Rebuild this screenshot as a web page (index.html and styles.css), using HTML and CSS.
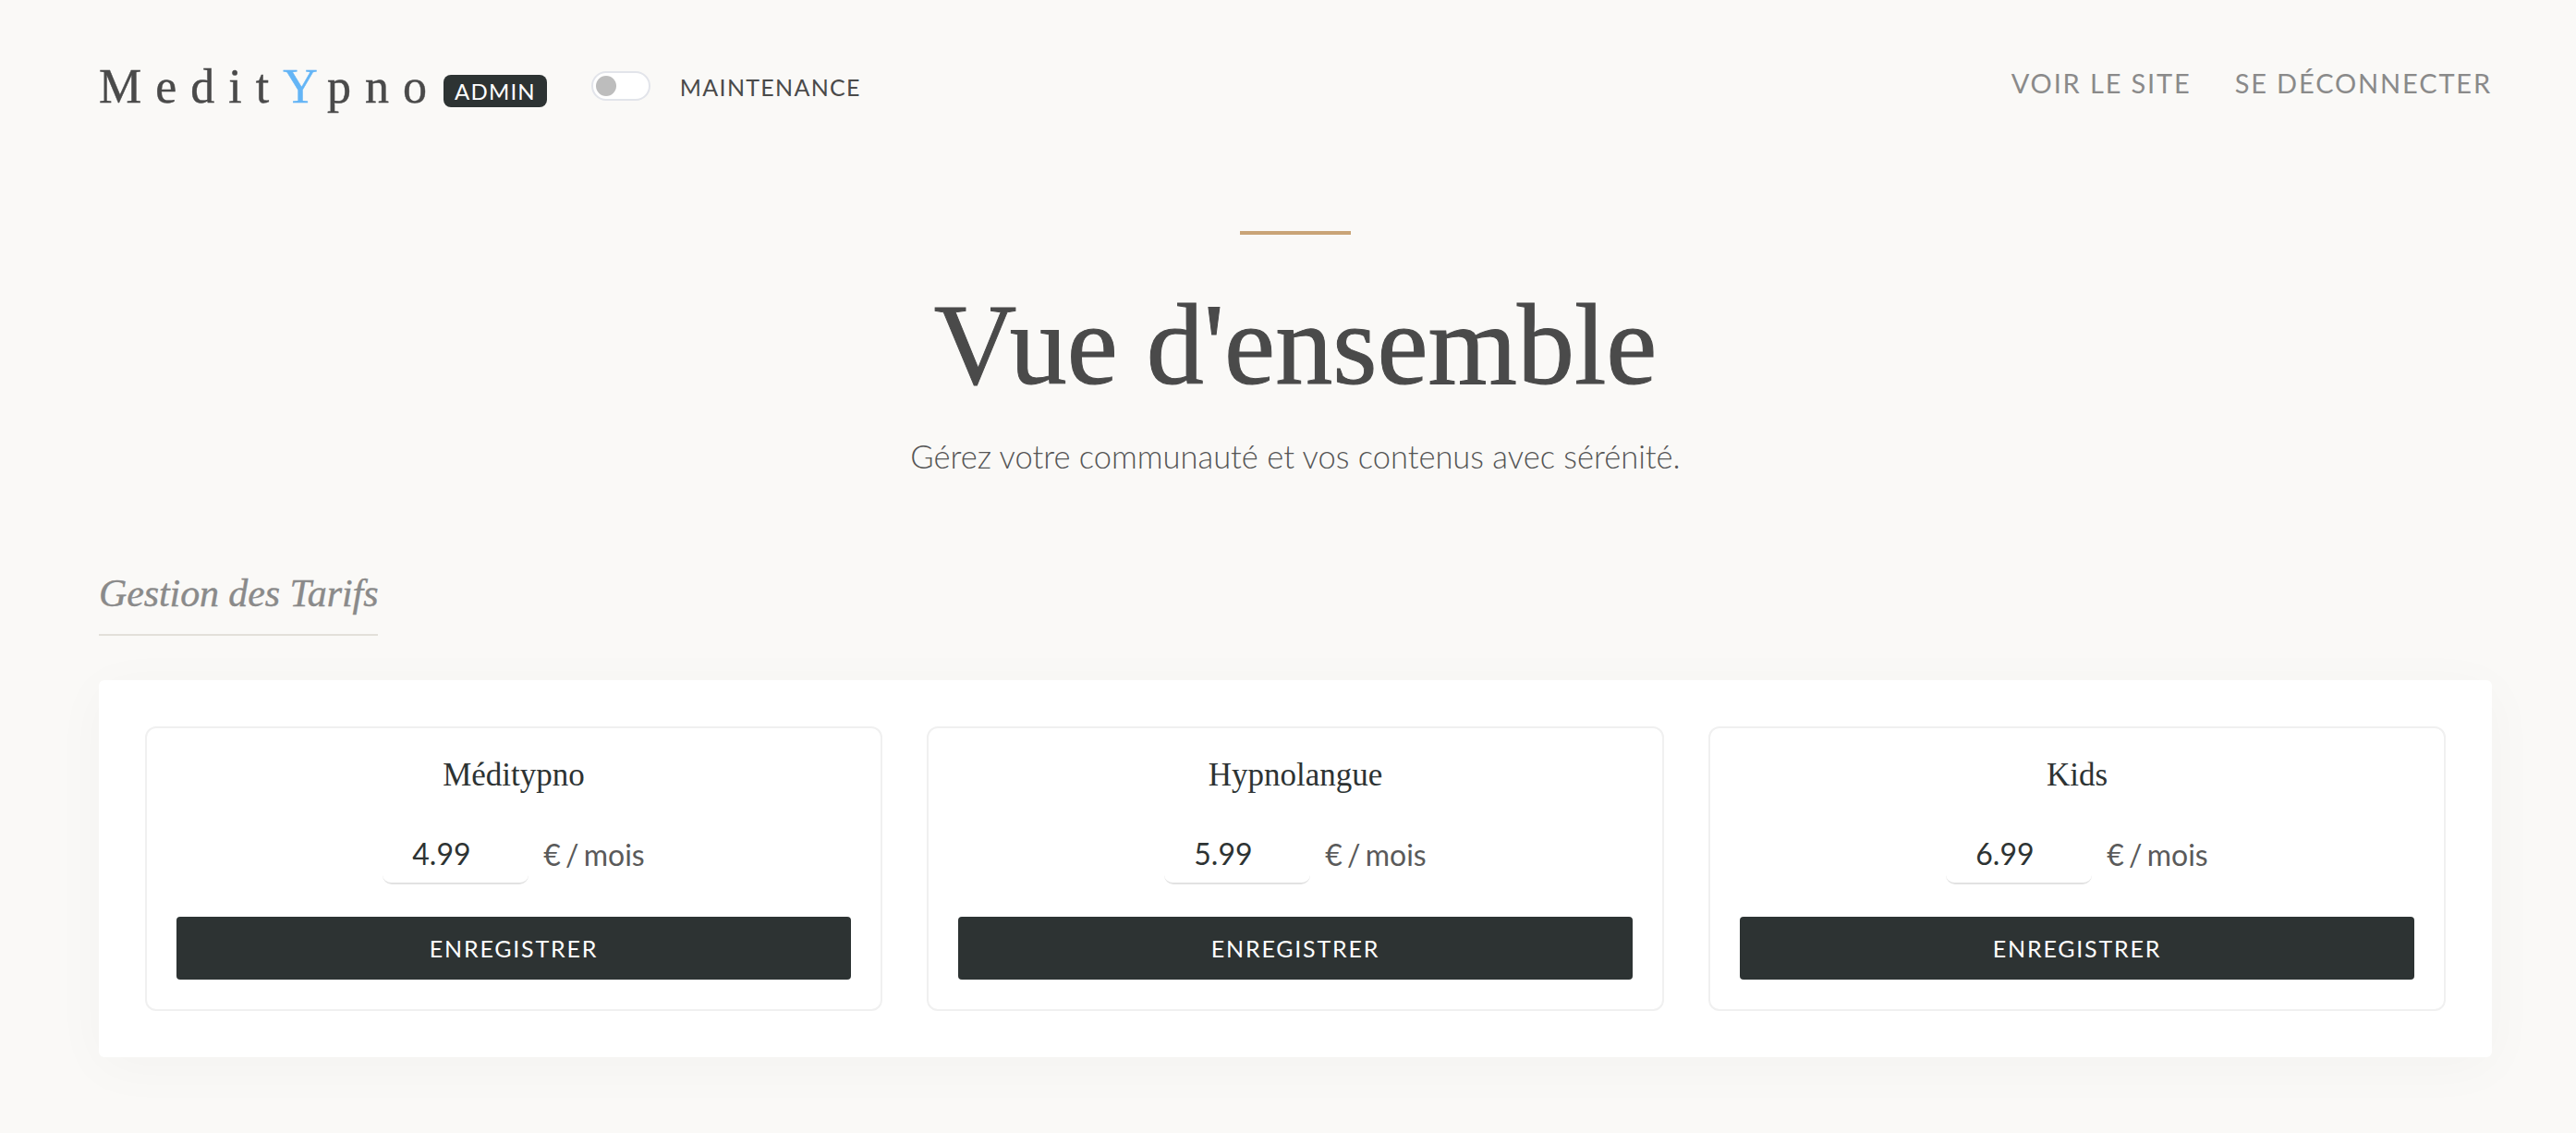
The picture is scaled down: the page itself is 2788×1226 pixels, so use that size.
FILE: index.html
```html
<!DOCTYPE html>
<html lang="fr">
<head>
    <meta charset="UTF-8">
    <meta name="viewport" content="width=device-width, initial-scale=1.0">
    <title>MeditYpno Admin</title>
    <link rel="stylesheet" href="styles.css">
</head>
<body>
    <header class="topbar">
        <div class="topbar-left">
            <a class="logo">Medit<span class="logo-y">Y</span>pno</a>
            <span class="badge">ADMIN</span>
            <div class="maintenance">
                <span class="switch"><span class="switch-knob"></span></span>
                <span class="maintenance-label">MAINTENANCE</span>
            </div>
        </div>
        <nav class="topnav">
            <a>VOIR LE SITE</a>
            <a>SE DÉCONNECTER</a>
        </nav>
    </header>

    <section class="hero">
        <div class="hero-line"></div>
        <h1>Vue d'ensemble</h1>
        <p>Gérez votre communauté et vos contenus avec sérénité.</p>
    </section>

    <main class="content">
        <h2 class="section-title">Gestion des Tarifs</h2>
        <div class="panel">
            <form class="price-card">
                <h3>Méditypno</h3>
                <div class="price-row">
                    <input class="price-input" type="text" value="4.99">
                    <span class="price-unit">€ / mois</span>
                </div>
                <button class="save-btn" type="button">ENREGISTRER</button>
            </form>
            <form class="price-card">
                <h3>Hypnolangue</h3>
                <div class="price-row">
                    <input class="price-input" type="text" value="5.99">
                    <span class="price-unit">€ / mois</span>
                </div>
                <button class="save-btn" type="button">ENREGISTRER</button>
            </form>
            <form class="price-card">
                <h3>Kids</h3>
                <div class="price-row">
                    <input class="price-input" type="text" value="6.99">
                    <span class="price-unit">€ / mois</span>
                </div>
                <button class="save-btn" type="button">ENREGISTRER</button>
            </form>
        </div>
    </main>
</body>
</html>
```

FILE: styles.css
```css
* {
    box-sizing: border-box;
}

body {
    margin: 0;
    height: 1226px;
    overflow: hidden;
    background-color: #faf9f7;
    color: #4a4a4a;
    font-family: Lato, "Open Sans", sans-serif;
}

.topbar {
    display: flex;
    justify-content: space-between;
    align-items: flex-start;
    padding: 62px 91px 0 107px;
    height: 250px;
}

.topbar-left {
    display: flex;
    align-items: center;
    height: 62px;
}

.logo {
    margin-right: 3px;
    font-family: "Liberation Serif", serif;
    font-size: 52px;
    letter-spacing: 15px;
    color: #4a4a4a;
    -webkit-text-stroke: 0.4px #4a4a4a;
}

.logo-y {
    color: #64b5f6;
    -webkit-text-stroke: 0.4px #64b5f6;
}

.badge {
    margin-top: 11px;
    padding: 0 12px;
    height: 35px;
    line-height: 36px;
    border-radius: 8px;
    background-color: #2d3333;
    color: #fff;
    font-size: 24px;
    letter-spacing: 1.2px;
}

.maintenance {
    display: flex;
    align-items: center;
    margin-left: 48px;
}

.switch {
    display: flex;
    align-items: center;
    width: 64px;
    height: 32px;
    padding-left: 3px;
    border: 2px solid #e2e4ea;
    border-radius: 16px;
    background-color: #fff;
}

.switch-knob {
    width: 22px;
    height: 22px;
    border-radius: 50%;
    background-color: #bdbdbd;
}

.maintenance-label {
    margin-left: 32px;
    margin-top: 2px;
    font-size: 25px;
    letter-spacing: 1.3px;
    color: #4a4a4a;
}

.topnav {
    display: flex;
    gap: 47px;
    height: 54px;
    align-items: center;
}

.topnav a {
    font-size: 29px;
    letter-spacing: 1.85px;
    color: #8a8a8a;
}

.hero {
    padding: 0 91px 0 107px;
    text-align: center;
}

.hero-line {
    width: 120px;
    height: 4px;
    margin: 0 auto;
    background-color: #c9a477;
}

.hero h1 {
    margin: 0;
    padding-top: 50px;
    font-family: "Liberation Serif", serif;
    font-size: 124px;
    font-weight: 400;
    line-height: 140px;
    color: #4a4a4a;
    -webkit-text-stroke: 1px #4a4a4a;
}

.hero p {
    margin: 27px 0 0;
    font-size: 34.5px;
    font-weight: 300;
    line-height: 46px;
    color: #555;
}

.content {
    padding: 0 91px 0 107px;
}

.section-title {
    display: inline-block;
    margin: 99px 0 0;
    padding-bottom: 18px;
    border-bottom: 2px solid #e2e0da;
    font-family: "Liberation Serif", serif;
    font-size: 42px;
    font-style: italic;
    font-weight: 400;
    line-height: 52px;
    letter-spacing: -0.1px;
    color: #8a8a8a;
    -webkit-text-stroke: 0.4px #8a8a8a;
}

.panel {
    display: grid;
    grid-template-columns: repeat(3, 1fr);
    gap: 48px;
    margin-top: 48px;
    padding: 50px;
    border-radius: 6px;
    background-color: #fff;
    box-shadow: 0 10px 60px rgba(0, 0, 0, 0.03);
}

.price-card {
    display: flex;
    flex-direction: column;
    align-items: center;
    height: 308px;
    padding: 31px 32px;
    border: 2px solid #f0f0f0;
    border-radius: 12px;
}

.price-card h3 {
    margin: 0;
    font-family: "Liberation Serif", serif;
    font-size: 35px;
    font-weight: 400;
    line-height: 40px;
    color: #2d3333;
}

.price-row {
    display: flex;
    align-items: center;
    gap: 16px;
    margin-top: 32px;
    height: 66px;
}

.price-input {
    width: 158px;
    height: 66px;
    padding: 0 32px;
    border: 0;
    border-bottom: 2px solid #e2e2e2;
    border-radius: 10px;
    background: #fff;
    font-family: Lato, sans-serif;
    font-size: 32px;
    color: #2d3333;
    outline: none;
}

.price-unit {
    font-size: 32px;
    word-spacing: -3px;
    color: #5a5a5a;
}

.save-btn {
    width: 100%;
    height: 68px;
    margin-top: 35px;
    padding-bottom: 2px;
    border: 0;
    border-radius: 4px;
    background-color: #2d3333;
    color: #fff;
    font-family: Lato, sans-serif;
    font-size: 25px;
    letter-spacing: 1.8px;
}
```
